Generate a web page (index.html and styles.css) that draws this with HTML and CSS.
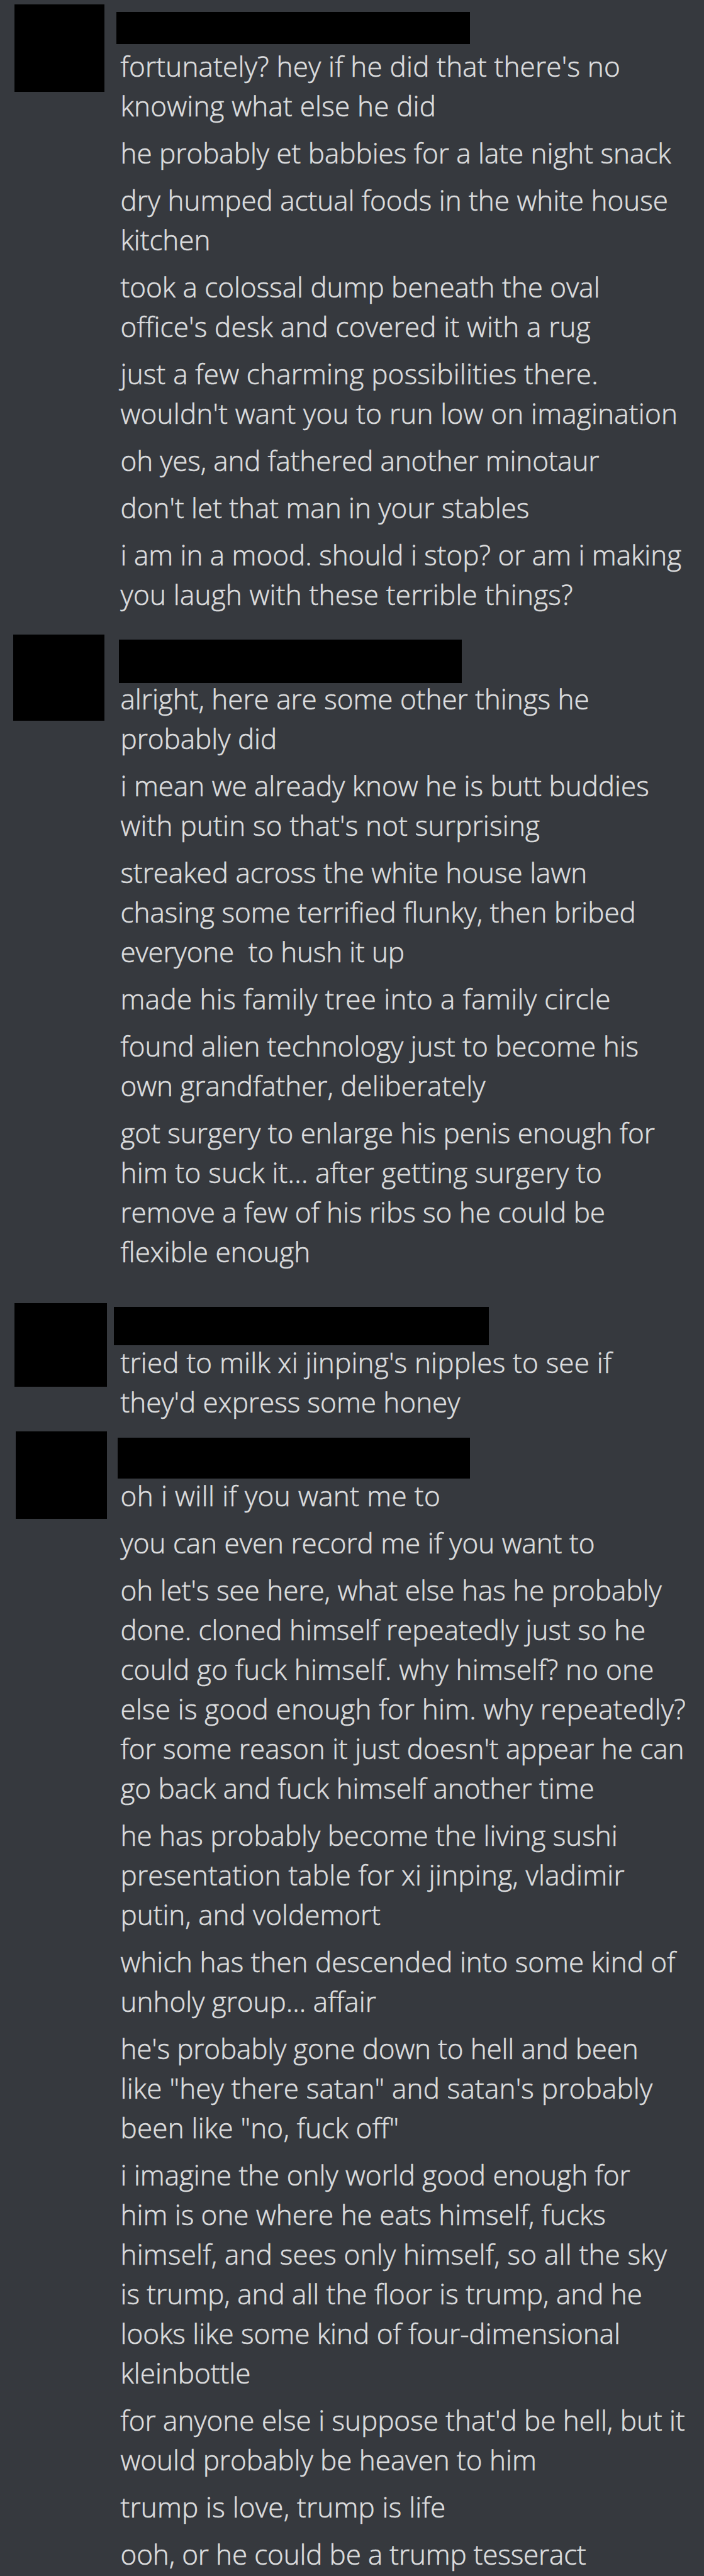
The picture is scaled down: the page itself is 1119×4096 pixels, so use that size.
FILE: index.html
```html
<!DOCTYPE html>
<html lang="en">
<head>
  <meta charset="UTF-8">
  <title>Chat log</title>
  <link rel="stylesheet" href="styles.css">
</head>
<body>
  <div class="chat">

    <div class="group first">
      <div class="avatar"></div>
      <div class="messages">
        <div class="header"><div class="name"></div></div>
        <p><span class="wide">fortunately? hey if he did that there's no<br>knowing what else he did</span></p>
        <p>he probably et babbies for a late night snack</p>
        <p>dry humped actual foods in the white house<br>kitchen</p>
        <p>took a colossal dump beneath the oval<br><span class="wide">office's desk and covered it with a rug</span></p>
        <p class="wide">just a few charming possibilities there.<br>wouldn't want you to run low on imagination</p>
        <p class="tight">oh yes, and fathered another minotaur</p>
        <p>don't let that man in your stables</p>
        <p>i am in a mood. should i stop? or am i making<br><span class="wide">you laugh with these terrible things?</span></p>
      </div>
    </div>

    <div class="group second">
      <div class="avatar"></div>
      <div class="messages">
        <div class="header"><div class="name"></div></div>
        <p>alright, here are some other things he<br>probably did</p>
        <p>i mean we already know he is butt buddies<br><span class="wide">with putin so that's not surprising</span></p>
        <p>streaked across the white house lawn<br>chasing some terrified flunky, then bribed<br><span class="tight">everyone  to hush it up</span></p>
        <p class="wider">made his family tree into a family circle</p>
        <p>found alien technology just to become his<br>own grandfather, deliberately</p>
        <p>got surgery to enlarge his penis enough for<br><span class="wide">him to suck it... after getting surgery to</span><br>remove a few of his ribs so he could be<br>flexible enough</p>
      </div>
    </div>

    <div class="group third">
      <div class="avatar"></div>
      <div class="messages">
        <div class="header"><div class="name"></div></div>
        <p><span class="wide">tried to milk xi jinping's nipples to see if</span><br>they'd express some honey</p>
      </div>
    </div>

    <div class="group fourth">
      <div class="avatar"></div>
      <div class="messages">
        <div class="header"><div class="name"></div></div>
        <p class="wider">oh i will if you want me to</p>
        <p>you can even record me if you want to</p>
        <p>oh let's see here, what else has he probably<br>done. cloned himself repeatedly just so he<br><span class="wide">could go fuck himself. why himself? no one<br>else is good enough for him. why repeatedly?</span><br>for some reason it just doesn't appear he can<br>go back and fuck himself another time</p>
        <p>he has probably become the living sushi<br><span class="wide">presentation table for xi jinping, vladimir</span><br>putin, and voldemort</p>
        <p>which has then descended into some kind of<br>unholy group... affair</p>
        <p><span class="tight">he's probably gone down to hell and been</span><br><span class="wide">like "hey there satan" and satan's probably<br>been like "no, fuck off"</span></p>
        <p>i imagine the only world good enough for<br>him is one where he eats himself, fucks<br><span class="wide">himself, and sees only himself, so all the sky</span><br>is trump, and all the floor is trump, and he<br>looks like some kind of four-dimensional<br>kleinbottle</p>
        <p>for anyone else i suppose that'd be hell, but it<br>would probably be heaven to him</p>
        <p class="wide">trump is love, trump is life</p>
        <p class="tight">ooh, or he could be a trump tesseract</p>
      </div>
    </div>

  </div>
</body>
</html>
```
FILE: styles.css
```css
* {
  box-sizing: border-box;
  margin: 0;
  padding: 0;
}
body {
  background-color: #36393e;
  color: #dcddde;
  font-family: "Open Sans", sans-serif;
  font-weight: 300;
  font-size: 44px;
  line-height: 62.97px;
  -webkit-text-stroke: 0.6px #dcddde;
}
.chat {
  height: 4096px;
  overflow: hidden;
}
.group {
  display: flex;
}
.avatar {
  flex-shrink: 0;
  background: #000;
}
.messages {
  flex: 1;
}
.messages p {
  padding-left: 191.5px;
  margin-bottom: 12px;
  white-space: pre;
}
.tight {
  letter-spacing: -0.15px;
}
.wide {
  letter-spacing: 0.22px;
}
.wider {
  letter-spacing: 0.4px;
}
.header {
  height: 74.4px;
}
.name {
  background: #000;
}

/* the avatar column takes no room of its own, the text indents past it */
.first .avatar {
  width: 143px;
  height: 139px;
  margin: 7px -166px 0 23px;
}
.first .header {
  padding: 19px 0 0 185px;
}
.first .name {
  width: 562px;
  height: 51px;
}

.second {
  margin-top: 16.6px;
}
.second .avatar {
  width: 145px;
  height: 137px;
  margin: 3px -166px 0 21px;
}
.second .header {
  padding: 11px 0 0 189px;
}
.second .name {
  width: 545px;
  height: 69px;
}

.third {
  margin-top: 27.5px;
}
.third .avatar {
  width: 147px;
  height: 133px;
  margin: 11px -170px 0 23px;
}
.third .header {
  padding: 17px 0 0 181px;
}
.third .name {
  width: 596px;
  height: 61px;
}

.fourth {
  margin-top: -0.4px;
}
.fourth .avatar {
  width: 145px;
  height: 139px;
  margin: 3px -170px 0 25px;
}
.fourth .header {
  padding: 13px 0 0 187px;
}
.fourth .name {
  width: 560px;
  height: 65px;
}
```
